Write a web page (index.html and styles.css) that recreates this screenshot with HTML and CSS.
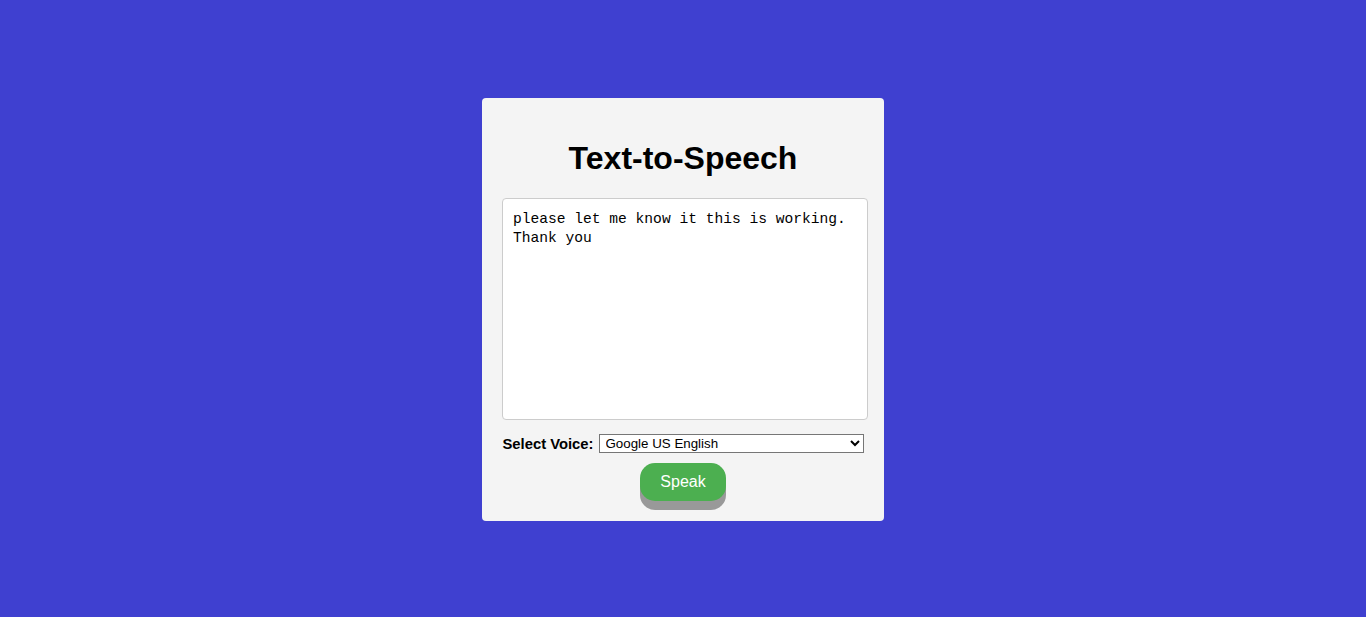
FILE: index.html
```html
<!DOCTYPE html>
<html lang="en">
<head>
<meta charset="utf-8">
<title>Text-to-Speech</title>
<link rel="stylesheet" href="styles.css">
</head>
<body>
  <main class="card">
    <h1 class="title">Text-to-Speech</h1>
    <textarea class="text-input">please let me know it this is working.
Thank you</textarea>
    <div class="voice-row">
      <label class="voice-label" for="voice">Select Voice:</label>
      <select class="voice-select" id="voice">
        <option>Google US English</option>
      </select>
    </div>
    <button class="speak-btn" type="button">Speak</button>
  </main>
</body>
</html>
```

FILE: styles.css
```css
html, body {
  margin: 0;
  padding: 0;
}

body {
  background: #3f40d0;
  font-family: "Liberation Sans", Arial, sans-serif;
  min-height: 100vh;
  box-sizing: border-box;
  padding-top: 2px;
  display: flex;
  align-items: center;
  justify-content: center;
}

.card {
  width: 402px;
  box-sizing: border-box;
  background: #f4f4f4;
  border-radius: 4px;
  padding: 20px;
  display: flex;
  flex-direction: column;
  align-items: center;
}

.title {
  margin: 22px 0 21px;
  font-size: 32px;
  font-weight: bold;
  color: #000;
  line-height: 37px;
}

.text-input {
  width: 366px;
  height: 222px;
  box-sizing: border-box;
  margin: 0 -4px 0 0;
  align-self: flex-start;
  padding: 11px 10px 10px;
  border: 1px solid #ccc;
  border-radius: 4px;
  background: #fff;
  font-family: "Liberation Mono", "DejaVu Sans Mono", monospace;
  font-size: 14.6px;
  line-height: 19px;
  color: #000;
  resize: none;
}

.voice-row {
  margin-top: 14px;
  display: flex;
  align-items: center;
  gap: 5px;
}

.voice-label {
  font-weight: bold;
  font-size: 14.8px;
  color: #000;
}

.voice-select {
  width: 265px;
  height: 19px;
  font-family: "Liberation Sans", Arial, sans-serif;
  font-size: 13.33px;
  border: 1px solid #767676;
  border-radius: 0;
  background: #fff;
  color: #000;
  padding: 0 0 0 2px;
}

.speak-btn {
  margin-top: 10px;
  width: 86px;
  height: 38px;
  background: #4caf50;
  color: #fff;
  border: none;
  border-radius: 15px;
  box-shadow: 0 9px #999;
  font-family: "Liberation Sans", Arial, sans-serif;
  font-size: 16px;
  padding: 0;
  cursor: pointer;
}
```
